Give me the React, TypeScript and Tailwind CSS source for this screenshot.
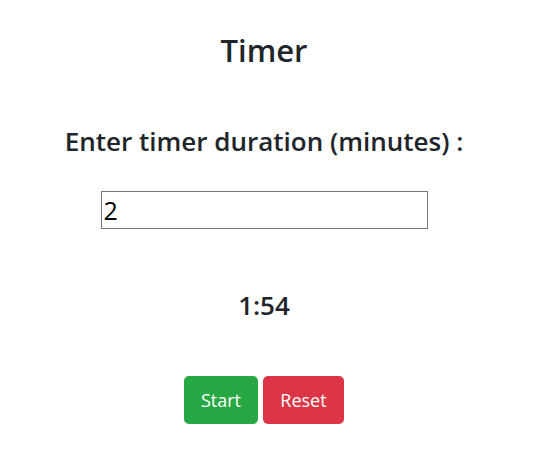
import React, { useState } from 'react';

export default function App() {
  const [minutes, setMinutes] = useState('2');

  return (
    <div className="w-[528px] pt-[31px] text-center text-[#212529] font-['Open_Sans',sans-serif]">
      <h2 className="text-[31px] font-semibold leading-[38px]">Timer</h2>
      <h3 className="mt-[56px] text-[26px] font-semibold leading-[32px]">Enter timer duration (minutes) :</h3>
      <div className="mt-[34px] flex justify-center">
        <input
          type="number"
          value={minutes}
          onChange={(e) => setMinutes(e.target.value)}
          className="w-[327px] h-[38px] border border-[#767676] px-[2px] text-[25px] text-black outline-none [appearance:textfield]"
        />
      </div>
      <h3 className="mt-[60px] text-[26px] font-semibold leading-[32px]">1:54</h3>
      <div className="mt-[55px] flex justify-center gap-[5px]">
        <button className="w-[74px] h-[48px] rounded-[5px] bg-[#28a745] text-white text-[18px] leading-[1.5]">Start</button>
        <button className="w-[81px] h-[48px] rounded-[5px] bg-[#dc3545] text-white text-[18px] leading-[1.5]">Reset</button>
      </div>
    </div>
  );
}
